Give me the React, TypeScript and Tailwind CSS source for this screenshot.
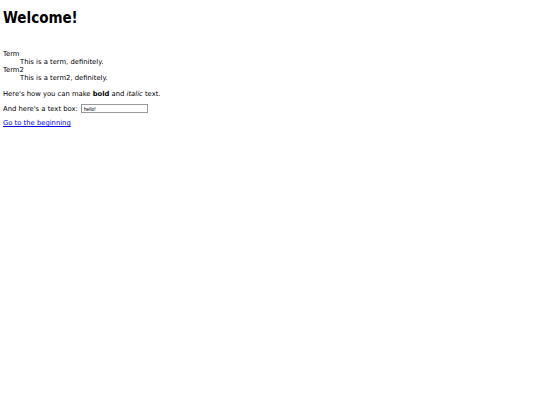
export default function App() {
  return (
    <div className="min-h-[405px] bg-white px-[3px] pt-[9px] text-black [font-family:'DejaVu_Sans',sans-serif]">
      {/* Heading */}
      <h1 className="text-[15px] font-bold leading-[19px] font-stretch-condensed">Welcome!</h1>

      {/* Definition list */}
      <dl className="mt-[22px] text-[6.8px] leading-[8px]">
        <dt>Term</dt>
        <dd className="ml-[17px]">This is a term, definitely.</dd>
        <dt>Term2</dt>
        <dd className="ml-[17px]">This is a term2, definitely.</dd>
      </dl>

      <p className="mt-[8px] text-[6.8px] leading-[8px]">
        Here's how you can make <b>bold</b> and <i>italic</i> text.
      </p>

      <p className="mt-[6px] flex items-center text-[6.8px] leading-[8px]">
        And here's a text box:
        <input
          type="text"
          defaultValue="hello!"
          className="ml-[3px] h-[9px] w-[67px] border border-[#999] px-[2px] text-[5px] leading-[7px] [font-family:'Liberation_Sans',sans-serif]"
        />
      </p>

      <p className="mt-[6px] text-[6.8px] leading-[8px]">
        <a href="#top" className="text-[#0000ee] underline">
          Go to the beginning
        </a>
      </p>
    </div>
  )
}
